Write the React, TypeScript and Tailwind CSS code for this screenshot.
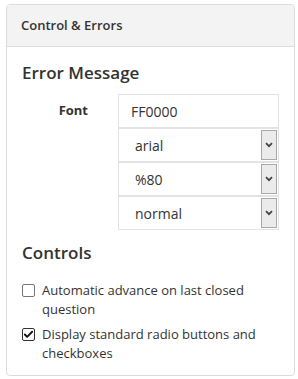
import { Check } from 'lucide-react'

function Chevron() {
  return (
    <svg viewBox="0 0 8 6" className="w-[8px] h-[6px]">
      <path d="M1 1.2l3 3 3-3" fill="none" stroke="#444" strokeWidth="1.8" />
    </svg>
  )
}

function SelectBox({ value }: { value: string }) {
  return (
    <div className="flex h-[34px] items-stretch border border-[#e3e3e3] bg-white">
      <span className="flex-1 pl-[16px] flex items-center text-[14px] text-[#333]">{value}</span>
      <span className="my-[1px] mr-[1px] w-[16px] flex items-center justify-center border border-[#a9a9a9] bg-[#ebebeb]">
        <Chevron />
      </span>
    </div>
  )
}

export default function App() {
  return (
    <div className="w-[298px] h-[379px] bg-white pt-[4px] pl-[6px] font-['Open_Sans',sans-serif] text-[#333]">
      <div className="w-[289px] h-[372px] rounded-[4px] border border-[#dcdcdc] overflow-hidden">
        {/* Header */}
        <div className="h-[42px] bg-[#f3f3f3] border-b border-[#dcdcdc] pl-[14px] flex items-center">
          <h2 className="text-[13px] font-semibold text-[#333]">Control &amp; Errors</h2>
        </div>

        <div className="pl-[15px] pr-[14px] pt-[14px]">
          <h3 className="text-[17px] font-semibold leading-[24px] text-[#333]">Error Message</h3>

          <div className="mt-[9px] flex">
            <label className="w-[66px] pt-[7px] text-right text-[13px] font-bold">Font</label>
            <div className="ml-[30px] w-[161px] flex flex-col">
              <div className="h-[34px] border border-[#e3e3e3] pl-[12px] flex items-center text-[14px]">FF0000</div>
              <SelectBox value="arial" />
              <SelectBox value="%80" />
              <SelectBox value="normal" />
            </div>
          </div>

          <h3 className="mt-[11px] text-[17px] font-semibold leading-[24px] text-[#333]">Controls</h3>

          <div className="mt-[16px] flex flex-col gap-[6px] text-[13px] leading-[19px]">
            <label className="flex items-start">
              <span className="mt-[3px] w-[13px] h-[13px] border border-[#767676] rounded-[2px] bg-white shrink-0" />
              <span className="ml-[7px]">Automatic advance on last closed question</span>
            </label>
            <label className="flex items-start">
              <span className="mt-[3px] w-[13px] h-[13px] border border-[#333] rounded-[2px] bg-white shrink-0 flex items-center justify-center">
                <Check className="w-[11px] h-[11px] text-[#111]" strokeWidth={4} />
              </span>
              <span className="ml-[7px]">Display standard radio buttons and checkboxes</span>
            </label>
          </div>
        </div>
      </div>
    </div>
  )
}
